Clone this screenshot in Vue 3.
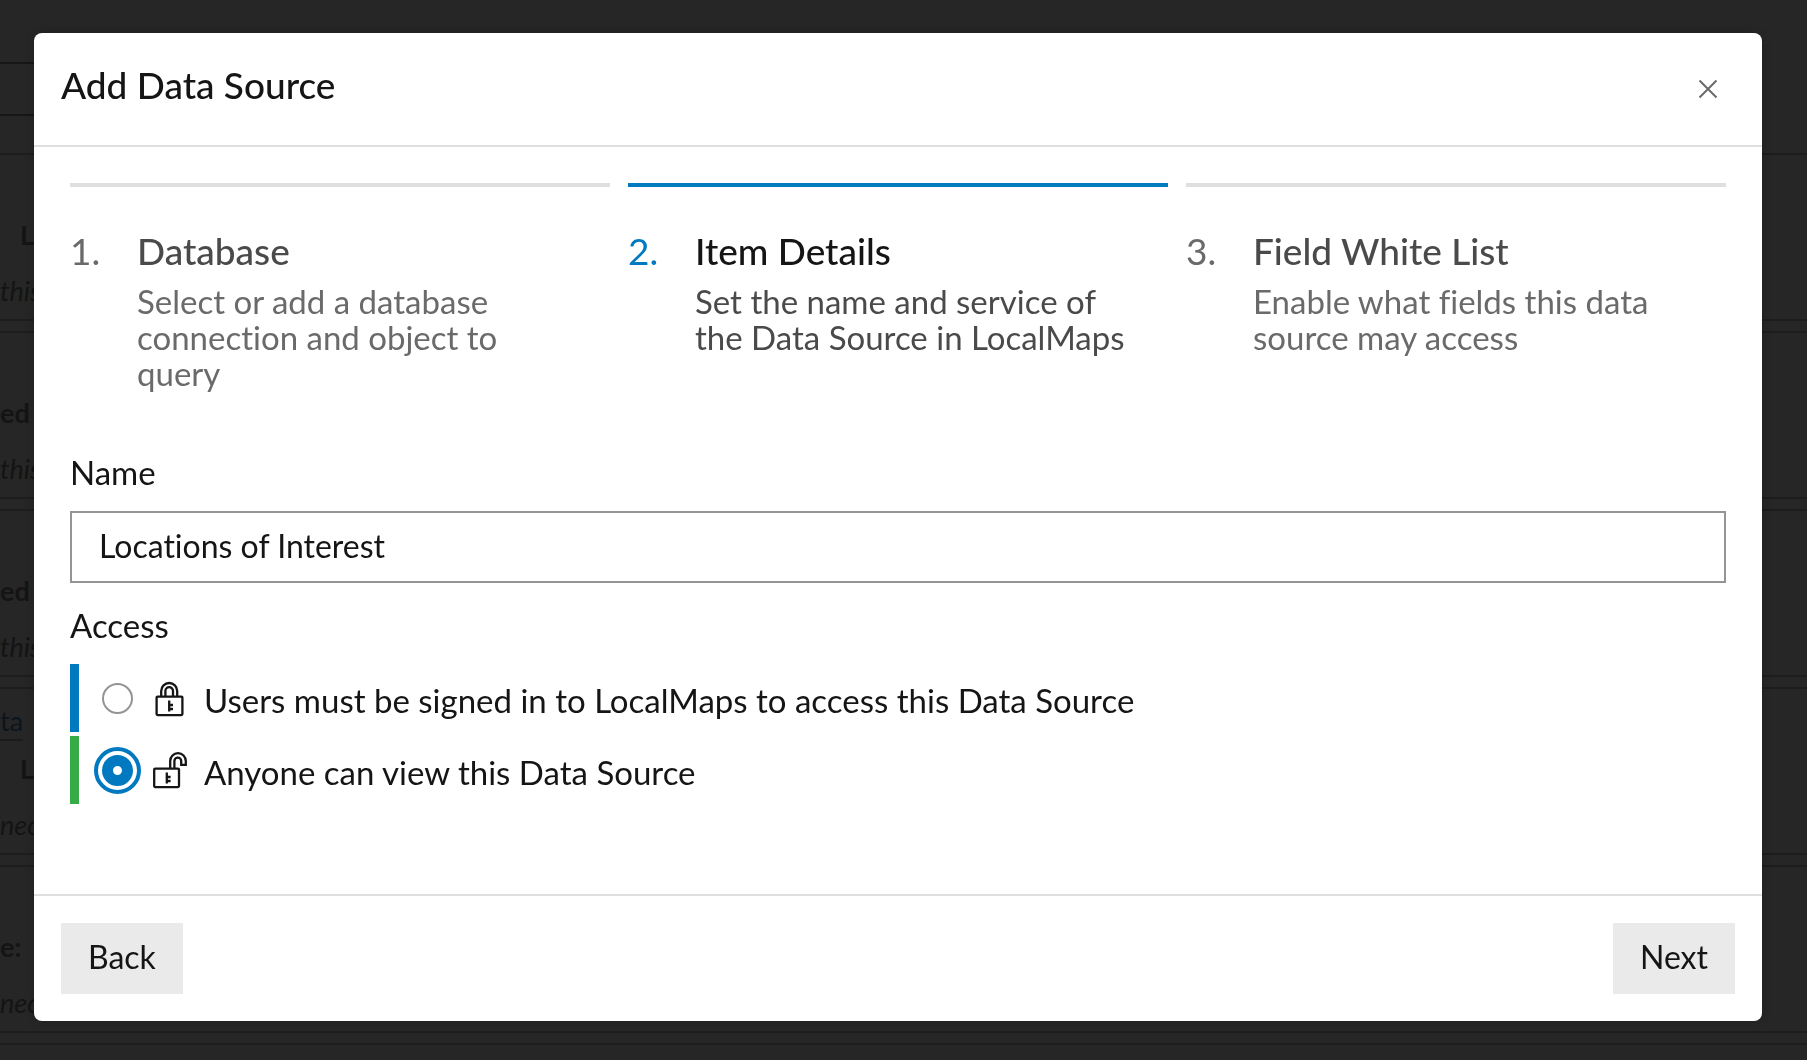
<template>
  <div class="page">
    <!-- Data source list behind the dialog -->
    <div class="backdrop" aria-hidden="true">
      <div class="backdrop__search" />
      <div v-for="(card, i) in cards" :key="i" class="backdrop__card">
        <p class="backdrop__link"><span v-if="card.link">{{ card.link }}</span></p>
        <p class="backdrop__label" :class="{ 'backdrop__label--inset': card.inset }">{{ card.label }}</p>
        <p class="backdrop__note">{{ card.note }}</p>
      </div>
    </div>

    <div class="overlay">
      <form class="dialog" role="dialog" aria-labelledby="dialog-title" @submit.prevent>
        <header class="dialog__header">
          <h1 id="dialog-title" class="dialog__title">Add Data Source</h1>
          <button type="button" class="dialog__close" aria-label="Close">
            <svg viewBox="0 0 20 20" width="20" height="20">
              <path d="M1.5 1.5 18.5 18.5M18.5 1.5 1.5 18.5" fill="none" stroke="#6a6a6a" stroke-width="2" />
            </svg>
          </button>
        </header>

        <div class="dialog__body">
          <ol class="steps">
            <li
              v-for="(step, i) in steps"
              :key="step.title"
              class="step"
              :class="{ 'step--active': i === current }"
            >
              <span class="step__number">{{ i + 1 }}.</span>
              <div class="step__text">
                <h2 class="step__title">{{ step.title }}</h2>
                <p class="step__desc">{{ step.desc }}</p>
              </div>
            </li>
          </ol>

          <label class="label" for="source-name">Name</label>
          <input id="source-name" v-model="name" class="input" type="text" />

          <fieldset class="access">
            <legend class="label">Access</legend>
            <label class="option option--private">
              <input v-model="access" class="option__radio" type="radio" name="access" value="private" />
              <svg class="option__icon" viewBox="0 0 36 40" width="36" height="40" aria-hidden="true">
                <rect x="4.6" y="18.6" width="25.8" height="18.5" rx="1" />
                <path d="M9.2 18.6V13a8 8 0 0 1 16 0v5.6M13.4 18.6V13a3.8 3.8 0 0 1 7.6 0v5.6" />
                <path d="M17.2 22.6v11M17.2 27h3.8M17.2 31h3.8" />
              </svg>
              <span>Users must be signed in to LocalMaps to access this Data Source</span>
            </label>
            <label class="option option--public">
              <input v-model="access" class="option__radio" type="radio" name="access" value="public" />
              <svg class="option__icon" viewBox="0 0 36 40" width="36" height="40" aria-hidden="true">
                <rect x="2.2" y="18.6" width="24.8" height="18.5" rx="1" />
                <path d="M18.2 18.6V11a7.8 7.8 0 0 1 15.6 0v3.8h-4.6V11a3.4 3.4 0 0 0-6.8 0v7.6" />
                <path d="M14.8 22.6v11M14.8 27h3.8M14.8 31h3.8" />
              </svg>
              <span>Anyone can view this Data Source</span>
            </label>
          </fieldset>
        </div>

        <footer class="dialog__footer">
          <button type="button" class="button">Back</button>
          <button type="submit" class="button">Next</button>
        </footer>
      </form>
    </div>
  </div>
</template>

<script setup>
import { ref } from 'vue'

const name = ref('Locations of Interest')
const access = ref('public')
const current = 1

const steps = [
  { title: 'Database', desc: 'Select or add a database connection and object to query' },
  { title: 'Item Details', desc: 'Set the name and service of the Data Source in LocalMaps' },
  { title: 'Field White List', desc: 'Enable what fields this data source may access' },
]

const cards = [
  { label: 'L', note: 'this', inset: true },
  { label: 'ed', note: 'this' },
  { label: 'ed', note: 'this' },
  { link: 'ta', label: 'L', note: 'nec', inset: true },
  { label: 'e:', note: 'nec' },
  { label: '', note: '' },
]
</script>

<style>
body {
  margin: 0;
}
</style>

<style scoped>
.page {
  min-height: 100vh;
  background: #262626;
  color: #151515;
  font-family: Lato, 'Open Sans', sans-serif;
  font-size: 33px;
  line-height: 36px;
  font-variant-ligatures: none;
}

.page *,
.page *::before {
  box-sizing: border-box;
}

h1,
h2,
p,
ol {
  margin: 0;
  padding: 0;
}

/* Backdrop */
.backdrop {
  height: 100vh;
  overflow: hidden;
  padding-top: 62px;
  font-size: 27px;
  color: #141414;
}

.backdrop__search {
  width: 50%;
  height: 54px;
  margin-bottom: 37px;
  border: 2px solid #161616;
  border-left: 0;
}

.backdrop__card {
  height: 168px;
  margin-bottom: 10px;
  border: solid #1d1d1d;
  border-width: 2px 0;
}

.backdrop__link {
  height: 54px;
  padding-top: 14px;
  color: #0c151d;
}

.backdrop__link span {
  display: inline-block;
  border-bottom: 2px solid #1b1b1b;
}

.backdrop__label {
  height: 56px;
  padding-top: 8px;
  font-weight: 700;
}

.backdrop__label--inset {
  padding-left: 20px;
}

.backdrop__note {
  padding-top: 8px;
  font-style: italic;
}

/* Dialog */
.overlay {
  position: fixed;
  inset: 0;
  display: flex;
  padding: 33px 45px 39px 34px;
}

.dialog {
  flex: 1;
  display: flex;
  flex-direction: column;
  border-radius: 8px;
  background: #fff;
  box-shadow: 0 0 8px rgba(0, 0, 0, 0.2);
}

.dialog__header {
  display: flex;
  align-items: flex-end;
  justify-content: space-between;
  padding: 30px 36px 38px 27px;
  border-bottom: 2px solid #dfdfdf;
}

.dialog__title {
  font-size: 37px;
  line-height: 44px;
  font-weight: 500;
}

.dialog__close {
  display: flex;
  padding: 8px;
  border: 0;
  background: none;
}

.dialog__body {
  flex: 1;
  padding: 36px;
}

/* Stepper */
.steps {
  display: grid;
  grid-template-columns: repeat(3, 1fr);
  gap: 18px;
  margin-bottom: 63px;
  list-style: none;
}

.step {
  display: flex;
  padding: 42px 40px 0 0;
  border-top: 4px solid #dfdfdf;
  color: #6a6a6a;
}

.step__number {
  flex: 0 0 67px;
  font-size: 37px;
  line-height: 44px;
}

.step__title {
  margin-bottom: 10px;
  font-size: 37px;
  line-height: 44px;
  font-weight: 500;
  color: #4a4a4a;
}

.step--active {
  border-color: #0079c1;
  color: #4a4a4a;
}

.step--active .step__number {
  color: #0079c1;
}

.step--active .step__title {
  color: #151515;
}

/* Form */
.label {
  display: block;
  padding: 0;
}

.input {
  width: 100%;
  height: 72px;
  margin: 21px 0 24px;
  padding: 0 27px 4px;
  border: 2px solid #949494;
  border-radius: 0;
  background: #fff;
  color: inherit;
  font: inherit;
  font-size: 32px;
}

.access {
  margin: 0;
  padding: 0;
  border: 0;
}

.access .label {
  margin-bottom: 21px;
}

.option {
  display: flex;
  align-items: center;
  height: 68px;
  margin-bottom: 4px;
  padding-left: 23px;
  border-left: 9px solid;
}

.option--private {
  border-left-color: #0079c1;
}

.option--public {
  border-left-color: #35ac46;
}

.option span {
  padding-top: 4px;
  color: #151515;
}

.option__radio {
  appearance: none;
  width: 31px;
  height: 31px;
  margin: 0 19px 0 0;
  border: 2px solid #949494;
  border-radius: 50%;
}

.option__radio:checked {
  border: 11px solid #0079c1;
  outline: 4px solid #0079c1;
  outline-offset: 4px;
}

.option__icon {
  margin-right: 16px;
  fill: none;
  stroke: #151515;
  stroke-width: 2.3;
}

/* Footer */
.dialog__footer {
  display: flex;
  justify-content: space-between;
  padding: 27px;
  border-top: 2px solid #dfdfdf;
}

.button {
  height: 71px;
  padding: 0 27px 4px;
  border: 0;
  background: #eaeaea;
  color: inherit;
  font: inherit;
  font-size: 32px;
}
</style>
